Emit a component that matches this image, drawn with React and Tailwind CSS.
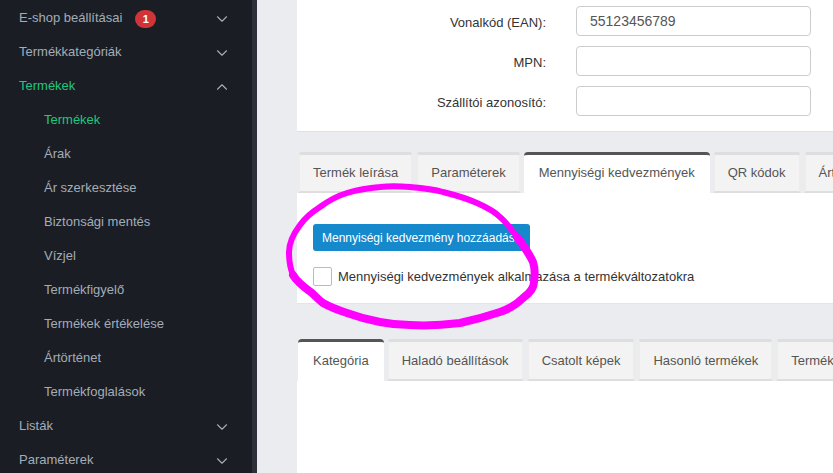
import React from 'react';
import { ChevronDown, ChevronUp } from 'lucide-react';

const sideItems = [
  { label: 'E-shop beállításai', badge: '1', icon: 'down' },
  { label: 'Termékkategóriák', icon: 'down' },
  { label: 'Termékek', icon: 'up', active: true },
  { label: 'Termékek', sub: true, active: true },
  { label: 'Árak', sub: true },
  { label: 'Ár szerkesztése', sub: true },
  { label: 'Biztonsági mentés', sub: true },
  { label: 'Vízjel', sub: true },
  { label: 'Termékfigyelő', sub: true },
  { label: 'Termékek értékelése', sub: true },
  { label: 'Ártörténet', sub: true },
  { label: 'Termékfoglalások', sub: true },
  { label: 'Listák', icon: 'down' },
  { label: 'Paraméterek', icon: 'down' },
];

const fields = [
  { label: 'Vonalkód (EAN):', value: '55123456789' },
  { label: 'MPN:', value: '' },
  { label: 'Szállítói azonosító:', value: '' },
];

const Tabs = ({ items, activeIndex, short }) => (
  <div className={`flex gap-[3px] items-end pl-[1px] ${short ? 'h-[41px] pt-0' : 'h-[42px]'}`}>
    {items.map((item, i) => (
      <div
        key={item}
        className={
          i === activeIndex
            ? `shrink-0 h-full px-[15px] ${short ? 'pt-[8px]' : 'pt-[9px]'} bg-white border-t-[3px] border-[#555] rounded-t-[4px] text-[#555] whitespace-nowrap`
            : `shrink-0 h-full px-[13px] ${short ? 'pt-[8px]' : 'pt-[9px]'} bg-[#f3f3f3] border-t-[3px] border-b-2 border-x-2 border-t-[#dedede] border-b-[#dedede] border-x-[#ececec] rounded-t-[4px] text-[#555] whitespace-nowrap`
        }
      >
        {item}
      </div>
    ))}
  </div>
);

export default function App() {
  return (
    <div className="relative flex h-[473px] w-[833px] overflow-hidden bg-[#ebecf0] text-[13px] font-['Liberation_Sans',Arial,sans-serif]">
      <aside className="shrink-0 w-[257px] h-full bg-[#1a1d23] border-r-[5px] border-[#2d3038] pt-[1px]">
        {sideItems.map((item, i) => (
          <div
            key={i}
            className={`flex items-center h-[34px] pr-[21px] ${item.sub ? 'pl-[44px]' : 'pl-[19px]'} ${item.active ? 'text-[#1fc77e]' : 'text-[#a3adb8]'}`}
          >
            <span>{item.label}</span>
            {item.badge && (
              <span className="ml-[13px] mt-[2px] flex items-center justify-center w-[21px] h-[18px] rounded-full bg-[#d13438] text-white text-[11px] font-bold">
                {item.badge}
              </span>
            )}
            {item.icon === 'down' && <ChevronDown className="ml-auto mt-[2px] text-[#a3adb8]" size={18} strokeWidth={1.5} />}
            {item.icon === 'up' && <ChevronUp className="ml-auto mt-[2px] text-[#a3adb8]" size={18} strokeWidth={1.5} />}
          </div>
        ))}
      </aside>

      <main className="min-w-0 flex-1 pl-[40px]">
        <section className="h-[132px] pt-[6px] bg-white border-b border-[#dfe0e4] flex flex-col gap-[10px]">
          {fields.map((f) => (
            <div key={f.label} className="flex items-center">
              <label className="w-[249px] pt-[4px] text-right text-[#333]">{f.label}</label>
              <div className="ml-[30px] w-[235px] h-[30px] px-[13px] flex items-center bg-white border border-[#ccc] rounded-[4px] text-[#555] text-[14px]">
                {f.value}
              </div>
            </div>
          ))}
        </section>

        <section className="mt-[20px] w-[700px]">
          <Tabs
            short
            items={['Termék leírása', 'Paraméterek', 'Mennyiségi kedvezmények', 'QR kódok', 'Ártörténet']}
            activeIndex={2}
          />
          <div className="h-[111px] bg-white pt-[31px] pl-[16px] border-b border-[#e4e5e8]">
            <button className="h-[27px] px-[9px] bg-[#1589cb] text-white text-[12px] rounded-[3px]">
              Mennyiségi kedvezmény hozzáadása
            </button>
            <div className="mt-[16px] flex items-center gap-[6px] text-[#333]">
              <span className="w-[19px] h-[19px] bg-white border border-[#bbb] rounded-[2px]" />
              <span>Mennyiségi kedvezmények alkalmazása a termékváltozatokra</span>
            </div>
          </div>
        </section>

        <section className="mt-[35px] w-[700px]">
          <Tabs
            items={['Kategória', 'Haladó beállítások', 'Csatolt képek', 'Hasonló termékek', 'Termék címkék']}
            activeIndex={0}
          />
          <div className="h-[100px] bg-white" />
        </section>
      </main>

      {/* hand drawn marker circle on top of the page */}
      <svg className="absolute left-0 top-0 pointer-events-none" width="833" height="473" fill="none" stroke="#ff00ff" strokeLinecap="round" strokeLinejoin="round">
        <path
          strokeWidth="6"
          d="M410 187C398 186 389 186 380 187C368 188 357 190 347 193C337 196 328 201 320 207C312 212 305 218 300 225C294 233 289 242 289 252C289 261 290 268 293 275M410 187C422 188 433 189 443 192C455 195 466 198 477 203C486 207 494 211 500 217C507 223 512 230 517 237"
        />
        <path
          strokeWidth="8"
          d="M293 275C297 282 305 288 312 293C316 297 319 300 323 303C330 307 338 310 347 313C358 317 369 320 380 322C390 324 400 325 410 325C427 326 444 325 460 323C474 320 488 316 500 312C509 309 517 304 523 298C530 293 534 288 534 282C535 275 535 268 533 262C529 253 523 245 517 237"
        />
      </svg>
    </div>
  );
}
